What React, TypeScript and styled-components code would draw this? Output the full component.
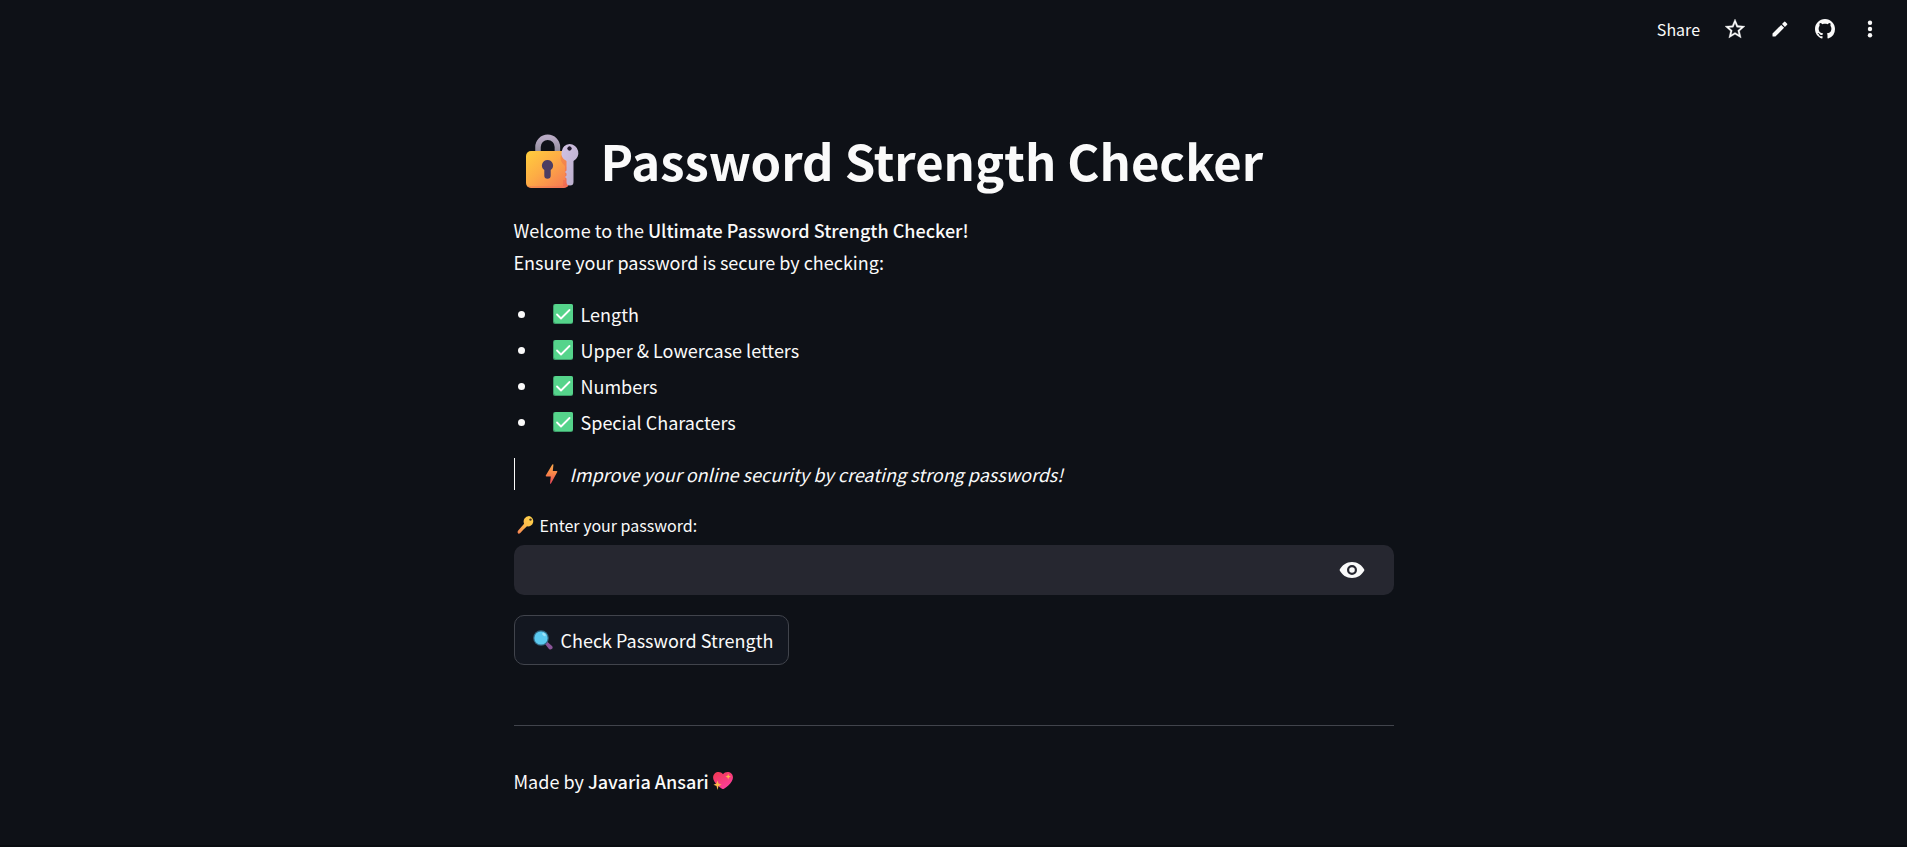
import React from "react";
import styled, { createGlobalStyle } from "styled-components";

const GlobalStyle = createGlobalStyle`
  * { box-sizing: border-box; }
  body {
    margin: 0;
    background: #0e1117;
    color: #fafafa;
    font-family: "Noto Sans CJK JP", "Noto Sans", sans-serif;
    font-size: 18px;
    line-height: 32px;
  }
`;

const Page = styled.div`
  min-height: 100vh;
  border-bottom: 2px solid #090c11;
`;

const Toolbar = styled.header`
  display: flex;
  justify-content: flex-end;
  align-items: center;
  gap: 5px;
  height: 58px;
  padding-right: 17px;
`;

const ToolButton = styled.button<{ $label?: boolean }>`
  display: flex;
  align-items: center;
  justify-content: center;
  width: ${(p) => (p.$label ? "auto" : "40px")};
  height: 40px;
  padding: 0 ${(p) => (p.$label ? "10px" : "0")};
  border: 0;
  border-radius: 10px;
  background: transparent;
  color: inherit;
  font: inherit;
  font-size: 16px;
  cursor: pointer;
`;

const Content = styled.main`
  display: flex;
  flex-direction: column;
  align-items: stretch;
  gap: 20px;
  max-width: 920px;
  margin: 0 auto;
  padding: 67px 20px 40px;
`;

const Title = styled.h1`
  display: flex;
  align-items: center;
  gap: 21px;
  margin: 0;
  padding-left: 12px;
  font-size: 49px;
  font-weight: 700;
  line-height: 69px;
`;

const Text = styled.p`
  margin: 0;
`;

const Strong = styled.strong`
  font-weight: 500;
`;

const CheckList = styled.ul`
  display: flex;
  flex-direction: column;
  gap: 4px;
  margin: 0;
  padding: 0;
  list-style: none;
`;

const CheckItem = styled.li`
  display: flex;
  align-items: center;
  gap: 8px;

  &::before {
    content: "";
    width: 7px;
    height: 7px;
    margin: 0 20px 0 4px;
    border-radius: 50%;
    background: #fafafa;
  }
`;

const Quote = styled.blockquote`
  display: flex;
  align-items: center;
  gap: 9px;
  margin: 0;
  padding-left: 30px;
  border-left: 1px solid #fafafa;
  font-style: italic;
`;

const Field = styled.div`
  display: flex;
  flex-direction: column;
  gap: 5px;
`;

const Label = styled.label`
  display: flex;
  align-items: center;
  gap: 5px;
  padding-left: 3px;
  font-size: 16px;
  line-height: 30px;
`;

const InputBox = styled.div`
  display: flex;
  height: 50px;
  border-radius: 10px;
  background: #262730;
`;

const PasswordInput = styled.input`
  flex: 1;
  min-width: 0;
  padding: 0 20px;
  border: 0;
  outline: 0;
  background: transparent;
  color: inherit;
  font: inherit;
`;

const RevealButton = styled.button`
  display: flex;
  align-items: center;
  justify-content: center;
  width: 84px;
  padding: 0;
  border: 0;
  background: transparent;
  color: inherit;
  cursor: pointer;
`;

const SubmitButton = styled.button`
  display: flex;
  align-items: center;
  align-self: flex-start;
  gap: 8px;
  height: 50px;
  padding: 0 15px 0 18px;
  border: 1px solid #41444c;
  border-radius: 10px;
  background: #131720;
  color: inherit;
  font: inherit;
  cursor: pointer;
`;

const Footer = styled.footer`
  display: flex;
  align-items: center;
  gap: 4px;
  margin-top: 40px;
  padding-top: 39px;
  border-top: 1px solid #41444c;
`;

const LockIcon = () => (
  <svg width="54" height="58" viewBox="0 -2 54 58" aria-hidden="true">
    <defs>
      <linearGradient id="lockBody" x1="0" y1="0" x2="1" y2="1">
        <stop offset="0" stopColor="#ffce3d" />
        <stop offset=".45" stopColor="#fdac45" />
        <stop offset="1" stopColor="#f57355" />
      </linearGradient>
      <linearGradient id="shackle" x1="0" y1="0" x2="0" y2="1">
        <stop offset="0" stopColor="#b9abc5" />
        <stop offset="1" stopColor="#8f8b99" />
      </linearGradient>
      <linearGradient id="keyMetal" x1="0" y1="0" x2="1" y2="1">
        <stop offset="0" stopColor="#d2c2e4" />
        <stop offset="1" stopColor="#b8adca" />
      </linearGradient>
      <clipPath id="lockClip"><rect y="18" width="44" height="38" rx="5" /></clipPath>
    </defs>
    <path d="M12 20v-6a9.700 9.700 0 0 1 19.400 0v6" fill="none" stroke="url(#shackle)" strokeWidth="5.500" />
    <rect y="18" width="43" height="37" rx="5" fill="url(#lockBody)" />
    <path d="M43 34v16a5 5 0 0 1-5 5H5a5 5 0 0 1-4-2h34q5 0 5-6V34z" fill="#e95e59" opacity=".3" clipPath="url(#lockClip)" />
    <path d="M21.500 27a5.500 5.500 0 0 1 3.200 10v5.500a3.200 3.200 0 0 1-6.400 0V37a5.500 5.500 0 0 1 3.200-10z" fill="#4b3d63" />
    <path d="M35 22q-2 6 4 11v14h-2v6q6 0 6-5V24z" fill="#e85d53" opacity=".35" />
    <path fillRule="evenodd" d="M43.500 11a9 9 0 0 1 4 17v21a3.500 3.500 0 0 1-7 0v-3.500l-1.500-1.500 1.500-1.500v-2l-1.500-1.500 1.500-1.500V28a9 9 0 0 1 3-17zm0 2.500a2 2 0 1 0 0 4 2 2 0 0 0 0-4z" fill="url(#keyMetal)" />
    <circle cx="43.500" cy="15.500" r="2" fill="#21172d" />
  </svg>
);

const CheckIcon = () => (
  <svg width="20" height="20" viewBox="0 0 20 20" aria-hidden="true">
    <rect width="20" height="20" rx="2" fill="#3e9e6b" />
    <rect x="1" width="19" height="19" rx="2" fill="#55d48b" />
    <path d="M4 10.500l4 4 8.500-8.500" fill="none" stroke="#fff" strokeWidth="1.800" strokeLinecap="round" strokeLinejoin="round" />
  </svg>
);

const BoltIcon = () => (
  <svg width="16" height="20" viewBox="0 0 16 20" aria-hidden="true">
    <defs>
      <linearGradient id="bolt" x1="0" y1="0" x2="0" y2="1">
        <stop offset="0" stopColor="#f9a84b" />
        <stop offset=".5" stopColor="#f98448" />
        <stop offset="1" stopColor="#e5435a" />
      </linearGradient>
    </defs>
    <path d="M7.300.5Q8.500-.4 8.400 1L7.800 7h3.700q1.300.2.600 1.300L6 19.500q-1 .8-1-.3l.8-6.700H1.500Q.3 12.300.9 11.200z" fill="url(#bolt)" />
  </svg>
);

const KeyIcon = () => (
  <svg width="18" height="18" viewBox="0 0 17 18" aria-hidden="true">
    <defs>
      <linearGradient id="key" x1="1" y1="0" x2="0" y2="1">
        <stop offset="0" stopColor="#ffd84a" />
        <stop offset=".55" stopColor="#fdb84b" />
        <stop offset="1" stopColor="#f57f55" />
      </linearGradient>
    </defs>
    <path d="M11.500 0a5.200 5.200 0 1 1-2 10.300L6 13.500l-3.200 3.500Q1 18.500.2 16.800q-.4-1.200.5-2.200L6.600 7.800A5.600 5.600 0 0 1 11.500 0z" fill="url(#key)" />
    <circle cx="13" cy="3.600" r="1.200" fill="#4b3525" />
  </svg>
);

const MagnifierIcon = () => (
  <svg width="20" height="20" viewBox="0 0 20 20" aria-hidden="true">
    <path d="M12.500 12l1.500-.5 5 4.500q1.300 1.500 0 2.800-1.500 1.400-3 .2L12 14z" fill="#8b5598" />
    <circle cx="8" cy="8" r="7.800" fill="#356984" />
    <circle cx="8" cy="8" r="6.600" fill="#5bcaf0" />
    <ellipse cx="11" cy="4.500" rx="2" ry="1.300" transform="rotate(35 11 4.500)" fill="#9ee4fa" />
  </svg>
);

const HeartIcon = () => (
  <svg width="20" height="18" viewBox="0 0 20 18" aria-hidden="true">
    <defs>
      <linearGradient id="heart" x1="0" y1="0" x2=".6" y2="1">
        <stop offset="0" stopColor="#f0384f" />
        <stop offset="1" stopColor="#fa3f9d" />
      </linearGradient>
    </defs>
    <path d="M10 2.300C12-.5 16-.5 18.300 1.500c2 2 2.200 5 .5 7.700C17 12.500 14 15 11 16.800q-1 .5-2 0C6 15 3 12.500 1.200 9.200-.5 6.500-.2 3.500 1.700 1.500 4-.5 8-.5 10 2.300z" fill="url(#heart)" />
    <path d="M4.500 8.500l1 3 3 1.300-3 1.200-1 4-1-4-3-1.200 3-1.300zM15.200 1.800l.7 2 2 .8-2 .8-.7 2-.7-2-2-.8 2-.8z" fill="#fcb94a" />
  </svg>
);

const StarIcon = () => (
  <svg width="24" height="24" viewBox="0 0 24 24" fill="currentColor" stroke="currentColor" strokeWidth=".3" aria-hidden="true">
    <path d="M22 9.240l-7.190-.62L12 2 9.190 8.630 2 9.240l5.460 4.730L5.820 21 12 17.270 18.180 21l-1.630-7.030L22 9.240zM12 15.400l-3.760 2.270 1-4.280-3.320-2.880 4.380-.38L12 6.100l1.710 4.040 4.380.38-3.320 2.880 1 4.280L12 15.400z" />
  </svg>
);

const PencilIcon = () => (
  <svg width="20" height="20" viewBox="0 0 20 20" fill="currentColor" aria-hidden="true">
    <path d="M2.500 14.600V17q0 .5.500.5h2.400l8.700-8.700-2.900-2.900zM12 5l2.900 2.900 2-2q.8-.8 0-1.500l-1.400-1.400q-.7-.8-1.500 0z" />
  </svg>
);

const GithubIcon = () => (
  <svg width="20" height="20" viewBox="0 0 16 16" fill="currentColor" aria-hidden="true">
    <path d="M8 0C3.580 0 0 3.580 0 8c0 3.540 2.290 6.530 5.470 7.590.4.070.55-.17.55-.38 0-.19-.01-.82-.01-1.490-2.010.37-2.530-.49-2.690-.94-.09-.23-.48-.94-.82-1.130-.28-.15-.68-.52-.01-.53.63-.01 1.080.58 1.230.82.72 1.210 1.870.87 2.330.66.07-.52.28-.87.51-1.070-1.780-.2-3.640-.89-3.640-3.950 0-.87.31-1.590.82-2.150-.08-.2-.36-1.020.08-2.120 0 0 .67-.21 2.200.82.64-.18 1.320-.27 2-.27s1.360.09 2 .27c1.530-1.040 2.200-.82 2.200-.82.44 1.100.16 1.920.08 2.120.51.56.82 1.270.82 2.150 0 3.070-1.870 3.750-3.650 3.950.29.25.54.73.54 1.480 0 1.070-.01 1.930-.01 2.200 0 .21.15.46.55.38A8.010 8.010 0 0 0 16 8c0-4.420-3.580-8-8-8z" />
  </svg>
);

const MoreIcon = () => (
  <svg width="20" height="20" viewBox="0 0 20 20" fill="currentColor" aria-hidden="true">
    <circle cx="10" cy="3.800" r="2.200" />
    <circle cx="10" cy="10" r="2.200" />
    <circle cx="10" cy="16.200" r="2.200" />
  </svg>
);

const EyeIcon = () => (
  <svg width="26" height="16" viewBox="0 0 26 16" aria-hidden="true">
    <path fillRule="evenodd" d="M13 0c5.500 0 10 3 12.500 8C23 13 18.500 16 13 16S3 13 .5 8C3 3 7.500 0 13 0zm0 3a5 5 0 1 0 0 10 5 5 0 0 0 0-10zm0 2.200a2.800 2.800 0 1 1 0 5.600 2.800 2.800 0 0 1 0-5.600z" fill="currentColor" />
  </svg>
);

const checks = ["Length", "Upper & Lowercase letters", "Numbers", "Special Characters"];

export default function App() {
  const [visible, setVisible] = React.useState(false);

  return (
    <Page>
      <GlobalStyle />
      <Toolbar>
        <ToolButton $label>Share</ToolButton>
        <ToolButton aria-label="Favorite"><StarIcon /></ToolButton>
        <ToolButton aria-label="Edit"><PencilIcon /></ToolButton>
        <ToolButton aria-label="View source on GitHub"><GithubIcon /></ToolButton>
        <ToolButton aria-label="Main menu"><MoreIcon /></ToolButton>
      </Toolbar>
      <Content>
        <Title><LockIcon />Password Strength Checker</Title>
        <Text>
          Welcome to the <Strong>Ultimate Password Strength Checker!</Strong>
          <br />
          Ensure your password is secure by checking:
        </Text>
        <CheckList>
          {checks.map((item) => (
            <CheckItem key={item}><CheckIcon />{item}</CheckItem>
          ))}
        </CheckList>
        <Quote><BoltIcon />Improve your online security by creating strong passwords!</Quote>
        <Field>
          <Label htmlFor="password"><KeyIcon />Enter your password:</Label>
          <InputBox>
            <PasswordInput id="password" type={visible ? "text" : "password"} />
            <RevealButton
              type="button"
              aria-label={visible ? "Hide password text" : "Show password text"}
              onClick={() => setVisible(!visible)}
            >
              <EyeIcon />
            </RevealButton>
          </InputBox>
        </Field>
        <SubmitButton type="button"><MagnifierIcon />Check Password Strength</SubmitButton>
        <Footer>
          <span>Made by <Strong>Javaria Ansari</Strong></span>
          <HeartIcon />
        </Footer>
      </Content>
    </Page>
  );
}
